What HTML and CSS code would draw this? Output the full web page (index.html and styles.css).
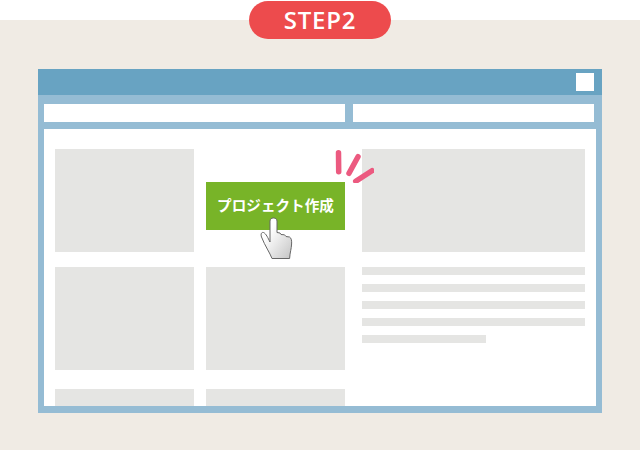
FILE: index.html
```html
<!DOCTYPE html>
<html lang="ja">
<head>
    <meta charset="UTF-8">
    <title>STEP2</title>
    <link rel="stylesheet" href="styles.css">
</head>
<body>
    <div class="step-badge">STEP2</div>
    <div class="stage">
        <div class="window">
            <div class="title-bar">
                <div class="close-box"></div>
            </div>
            <div class="toolbar">
                <div class="field field-wide"></div>
                <div class="field field-narrow"></div>
            </div>
            <div class="content">
                <div class="card-grid">
                    <div class="block"></div>
                    <div class="action-cell">
                        <div class="create-button">プロジェクト作成</div>
                        <svg class="sparks" width="40" height="34" viewBox="0 0 40 34">
                            <path d="M4.5 3.7 L4.7 22.7 M24 7.7 L15 24.3 M38 21.7 L21.7 32.3" fill="none" stroke="#ec5a80" stroke-width="5.5" stroke-linecap="round"/>
                        </svg>
                        <svg class="hand" width="34" height="44" viewBox="0 0 34 44">
                            <defs>
                                <linearGradient id="hand-fill" x1="0" y1="0" x2="1" y2="1">
                                    <stop offset="0.3" stop-color="#ffffff"/>
                                    <stop offset="1" stop-color="#c4c4c4"/>
                                </linearGradient>
                            </defs>
                            <path d="M10 4 C10 0 17 0 17 4 L17 15.5 L20 16 L21 17.5 L24.5 17.8 L26 19.5 L29.5 20 C31.5 21 31.8 24 31.6 27 C31.4 32 30 35 29.6 41.5 L12 41.5 C10 36 5 29 1.5 20 C0.5 17 1.5 15 3.5 15.5 C6 16.5 8 21 10 25 Z" fill="url(#hand-fill)" stroke="#666" stroke-width="1" stroke-linejoin="round"/>
                        </svg>
                    </div>
                    <div class="block"></div>
                    <div class="block"></div>
                    <div class="block block-cut"></div>
                    <div class="block block-cut"></div>
                </div>
                <div class="detail">
                    <div class="block"></div>
                    <div class="lines">
                        <div class="line"></div>
                        <div class="line"></div>
                        <div class="line"></div>
                        <div class="line"></div>
                        <div class="line line-short"></div>
                    </div>
                </div>
            </div>
        </div>
    </div>
</body>
</html>
```

FILE: styles.css
```css
html, body {
    margin: 0;
    padding: 0;
    height: 100%;
    background-color: #fff;
    overflow: hidden;
}
body {
    position: relative;
    padding-top: 20px;
    box-sizing: border-box;
}
.step-badge {
    position: absolute;
    top: 1px;
    left: 249px;
    width: 142px;
    height: 38px;
    border-radius: 19px;
    background-color: #ed4b4d;
    color: #fff;
    font-family: "Open Sans", sans-serif;
    font-weight: 600;
    font-size: 24px;
    line-height: 38px;
    letter-spacing: 0.8px;
    text-align: center;
}
.stage {
    height: 430px;
    padding: 49px 38px 0;
    box-sizing: border-box;
    background-color: #f0ebe4;
}
.window {
    width: 564px;
    height: 344px;
    background-color: #95bcd4;
}
.title-bar {
    display: flex;
    justify-content: flex-end;
    align-items: center;
    height: 26px;
    padding-right: 8px;
    background-color: #68a3c2;
}
.close-box {
    width: 18px;
    height: 18px;
    background-color: #fff;
}
.toolbar {
    display: flex;
    gap: 8px;
    padding: 9px 8px 7px 6px;
}
.field {
    height: 18px;
    background-color: #fff;
}
.field-wide {
    width: 301px;
}
.field-narrow {
    width: 241px;
}
.content {
    display: flex;
    gap: 17px;
    width: 552px;
    height: 277px;
    margin-left: 6px;
    padding: 20px 11px 0;
    box-sizing: border-box;
    background-color: #fff;
}
.card-grid {
    display: grid;
    grid-template-columns: 139px 139px;
    grid-template-rows: 103px 103px 17px;
    column-gap: 12px;
    row-gap: 15px;
}
.block {
    background-color: #e5e5e3;
}
.block-cut {
    margin-top: 4px;
    height: 17px;
}
.action-cell {
    position: relative;
    padding-top: 33px;
}
.create-button {
    height: 48px;
    background-color: #78b428;
    color: #fff;
    font-family: "Noto Sans CJK JP", sans-serif;
    font-weight: 700;
    font-size: 14.6px;
    line-height: 46px;
    text-align: center;
}
.sparks {
    position: absolute;
    top: 0;
    left: 128px;
}
.hand {
    position: absolute;
    top: 68px;
    left: 54px;
}
.detail {
    display: flex;
    flex-direction: column;
    width: 223px;
}
.detail .block {
    height: 103px;
}
.lines {
    display: flex;
    flex-direction: column;
    gap: 9px;
    margin-top: 15px;
}
.line {
    height: 8px;
    background-color: #e5e5e3;
}
.line-short {
    width: 124px;
}
```
